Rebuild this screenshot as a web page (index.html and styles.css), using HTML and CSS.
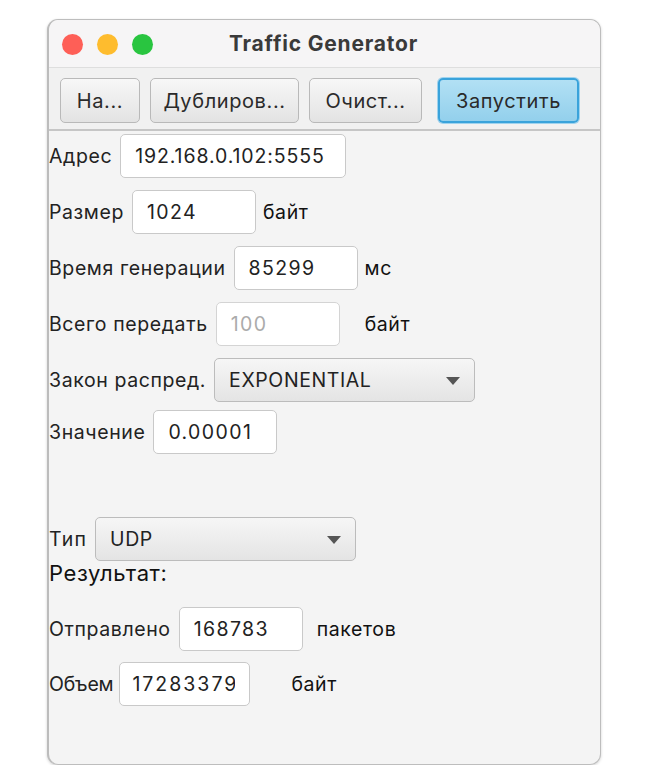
FILE: index.html
```html
<!DOCTYPE html>
<html lang="ru">
<head>
<meta charset="utf-8">
<title>Traffic Generator</title>
<link rel="stylesheet" href="styles.css">
</head>
<body>
<div class="window">
  <div class="titlebar">
    <div class="lights">
      <span class="light red"></span>
      <span class="light yellow"></span>
      <span class="light green"></span>
    </div>
    <div class="title">Traffic Generator</div>
  </div>
  <div class="toolbar">
    <div class="btn b1">На...</div>
    <div class="btn b2">Дублиров...</div>
    <div class="btn b3">Очист...</div>
    <div class="btn b4 default">Запустить</div>
  </div>
  <div class="form">
    <div class="row">
      <span class="label">Адрес</span>
      <div class="field w-addr">192.168.0.102:5555</div>
    </div>
    <div class="row">
      <span class="label">Размер</span>
      <div class="field w-s">1024</div>
      <span class="unit u7">байт</span>
    </div>
    <div class="row">
      <span class="label">Время генерации</span>
      <div class="field w-s">85299</div>
      <span class="unit u7">мс</span>
    </div>
    <div class="row">
      <span class="label">Всего передать</span>
      <div class="field w-s disabled">100</div>
      <span class="unit u25">байт</span>
    </div>
    <div class="row">
      <span class="label">Закон распред.</span>
      <div class="combo">
        <span>EXPONENTIAL</span>
        <svg class="arrow" width="14" height="8" viewBox="0 0 14 8"><path d="M0 0H14L7 8Z" fill="#555"/></svg>
      </div>
    </div>
    <div class="row tight">
      <span class="label">Значение</span>
      <div class="field w-s">0.00001</div>
    </div>
    <div class="row spaced">
      <span class="label lbl-type">Тип</span>
      <div class="combo">
        <span>UDP</span>
        <svg class="arrow" width="14" height="8" viewBox="0 0 14 8"><path d="M0 0H14L7 8Z" fill="#555"/></svg>
      </div>
    </div>
    <div class="heading">Результат:</div>
    <div class="row first-res">
      <span class="label">Отправлено</span>
      <div class="field w-s">168783</div>
      <span class="unit u14">пакетов</span>
    </div>
    <div class="row">
      <span class="label lbl-vol">Объем</span>
      <div class="field w-vol"><span class="clip">17283379</span></div>
      <span class="unit u41">байт</span>
    </div>
  </div>
</div>
</body>
</html>
```

FILE: styles.css
```css
* { box-sizing: border-box; }
body {
  margin: 0;
  background: #ffffff;
  font-family: Inter, "Liberation Sans", sans-serif;
  color: #1f1f1f;
}
.window {
  margin: 19px 0 0 47px;
  width: 554px;
  height: 746px;
  border: 1px solid #bdbdbd;
  border-left: 2px solid #bcbcbc;
  border-radius: 11px;
  background: #f4f4f4;
  overflow: hidden;
  box-shadow: 0 1px 3px rgba(0,0,0,0.18);
}
.titlebar {
  height: 48px;
  background: #f6f5f6;
  border-bottom: 1px solid #dedede;
  display: flex;
  align-items: center;
  justify-content: center;
  position: relative;
}
.lights {
  position: absolute;
  left: 13px;
  top: 14px;
  display: flex;
  gap: 14px;
}
.light {
  width: 21px;
  height: 21px;
  border-radius: 50%;
  display: block;
}
.red { background: #fe5f57; }
.yellow { background: #febc2e; }
.green { background: #29c540; }
.title {
  font-weight: 700;
  font-size: 21px;
  color: #3a3a3a;
  letter-spacing: 0.8px;
  margin-left: -2px;
}
.toolbar {
  height: 63px;
  background: #f1f1f1;
  border-bottom: 2px solid #c6c6c6;
  display: flex;
  align-items: flex-start;
  padding: 10px 0 0 11px;
}
.btn {
  height: 45px;
  border: 1px solid #b9b9b9;
  border-radius: 5px;
  background: linear-gradient(#f7f7f7, #e3e3e3);
  display: flex;
  align-items: center;
  justify-content: center;
  font-size: 20px;
  letter-spacing: 0.6px;
  color: #2a2a2a;
}
.b1 { width: 80px; }
.b2 { width: 149px; margin-left: 10px; }
.b3 { width: 113px; margin-left: 10px; }
.b4 { width: 141px; margin-left: 16px; }
.btn.default {
  background: linear-gradient(#b2e0f4, #93d0ec);
  border: 2px solid #3aa3db;
  box-shadow: 0 0 0 1px #9fd3ee;
}
.form {
  display: flex;
  flex-direction: column;
  padding: 3px 0 0 0;
  font-size: 19.5px;
  letter-spacing: 0.6px;
}
.row {
  display: flex;
  align-items: center;
  height: 44px;
  margin-bottom: 12px;
}
.row.tight { margin-top: -4px; }
.row.spaced { margin-top: 51px; }
.label { margin-right: 8px; white-space: nowrap; color: #222; }
.lbl-type { letter-spacing: 1.2px; }
.lbl-vol { letter-spacing: -0.2px; margin-right: 6px; }
.field {
  height: 44px;
  background: #ffffff;
  border: 1px solid #c9c9c9;
  border-radius: 5px;
  padding: 0 0 0 14px;
  display: flex;
  align-items: center;
  white-space: nowrap;
  color: #222;
  letter-spacing: 1.4px;
  overflow: hidden;
}
.field.disabled { color: #ababab; border-color: #d4d4d4; }
.w-addr { width: 226px; letter-spacing: 0.9px; }
.w-s { width: 124px; }
.w-vol { width: 131px; padding-left: 12px; letter-spacing: 2px; }
.clip { display: block; width: 103px; overflow: hidden; white-space: nowrap; }
.combo {
  width: 261px;
  height: 44px;
  border: 1px solid #bcbcbc;
  border-radius: 5px;
  background: linear-gradient(#f6f6f6, #e4e4e4);
  display: flex;
  align-items: center;
  justify-content: space-between;
  padding: 0 14px 0 14px;
  color: #222;
}
.arrow { margin-top: 1px; }
.unit { color: #111; }
.u7 { margin-left: 7px; }
.u25 { margin-left: 25px; }
.u14 { margin-left: 14px; }
.u41 { margin-left: 41px; }
.heading {
  font-size: 22px;
  line-height: 26px;
  margin: -13px 0 21px 0;
  color: #111;
}
.row.first-res { margin-top: 0; margin-bottom: 11px; }
```
